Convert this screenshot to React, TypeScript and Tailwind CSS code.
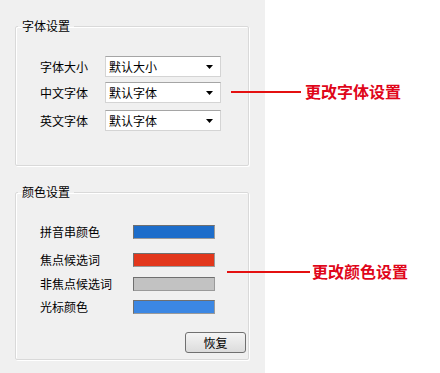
import React from "react"

interface ColorRow {
  label: string
  color: string
  gap: string
}

const fontRows = [
  { label: "字体大小", value: "默认大小", mt: "mt-0" },
  { label: "中文字体", value: "默认字体", mt: "mt-[5px]" },
  { label: "英文字体", value: "默认字体", mt: "mt-[7px]" },
]

const colorRows: ColorRow[] = [
  { label: "拼音串颜色", color: "bg-[#1d6dca]", gap: "mt-0" },
  { label: "焦点候选词", color: "bg-[#e2371c]", gap: "mt-[14px]" },
  { label: "非焦点候选词", color: "bg-[#c2c2c2]", gap: "mt-[10px]" },
  { label: "光标颜色", color: "bg-[#3c87e3]", gap: "mt-[9px]" },
]

function GroupBox({ title, className, children }: { title: string; className: string; children: React.ReactNode }) {
  return (
    <fieldset className={`m-0 w-[234px] border border-[#d9d9d9] rounded-[2px] shadow-[inset_1px_1px_0_#ffffff,1px_1px_0_#ffffff] p-0 ${className}`}>
      <legend className="ml-[2px] px-[4px] leading-[16px] text-black">{title}</legend>
      {children}
    </fieldset>
  )
}

function Select({ value }: { value: string }) {
  return (
    <div className="flex items-center justify-between w-[116px] h-[21px] bg-white border border-[#d4d4d4] border-t-[#a5a5a5] pl-[3px] pr-[7px]">
      <span className="leading-[16px]">{value}</span>
      {/* dropdown arrow */}
      <svg width="7" height="4" viewBox="0 0 7 4">
        <path d="M0 0 L7 0 L3.5 4 Z" fill="#000" />
      </svg>
    </div>
  )
}

// red annotation: a thin line pointing at the group, then the caption
function Callout({ text, left, top, lineWidth, gap }: { text: string; left: string; top: string; lineWidth: string; gap: string }) {
  return (
    <div className={`absolute ${left} ${top} flex items-center h-[21px]`}>
      <div className={`${lineWidth} h-[2px] bg-[#e41010]`}></div>
      <span className={`${gap} text-[16px] leading-[21px] font-bold text-[#e0061a]`}>{text}</span>
    </div>
  )
}

export default function App() {
  return (
    <div className="relative flex w-[440px] h-[373px] bg-white text-[12px] text-black font-['Noto_Sans_CJK_SC','Microsoft_YaHei',sans-serif]">
      <div className="w-[265px] h-full bg-[#f0f0f0] pl-[15px] pt-[18px]">
        <GroupBox title="字体设置" className="h-[148px]">
          <div className="pl-[24px] pt-[22px]">
            {fontRows.map((row) => (
              <div key={row.label} className={`flex items-center h-[21px] ${row.mt}`}>
                <span className="w-[65px] leading-[16px]">{row.label}</span>
                <Select value={row.value} />
              </div>
            ))}
          </div>
        </GroupBox>

        <GroupBox title="颜色设置" className="mt-[18px] h-[176px]">
          <div className="pl-[24px] pt-[25px]">
            {colorRows.map((row) => (
              <div key={row.label} className={`flex items-center h-[14px] ${row.gap}`}>
                <span className="w-[93px] leading-[16px]">{row.label}</span>
                <div className={`w-[82px] h-[14px] border border-[#9a9a9a] border-t-[#6f6f6f] border-l-[#6f6f6f] ${row.color}`}></div>
              </div>
            ))}
            <div className="flex justify-end mt-[18px] pr-[2px]">
              <button className="w-[61px] h-[21px] rounded-[3px] border border-[#707070] bg-gradient-to-b from-[#f4f4f4] to-[#dcdcdc] leading-[16px] text-black">
                恢复
              </button>
            </div>
          </div>
        </GroupBox>
      </div>

      <Callout text="更改字体设置" left="left-[231px]" top="top-[81px]" lineWidth="w-[70px]" gap="ml-[4px]" />
      <Callout text="更改颜色设置" left="left-[227px]" top="top-[261px]" lineWidth="w-[83px]" gap="ml-[2px]" />
    </div>
  )
}
